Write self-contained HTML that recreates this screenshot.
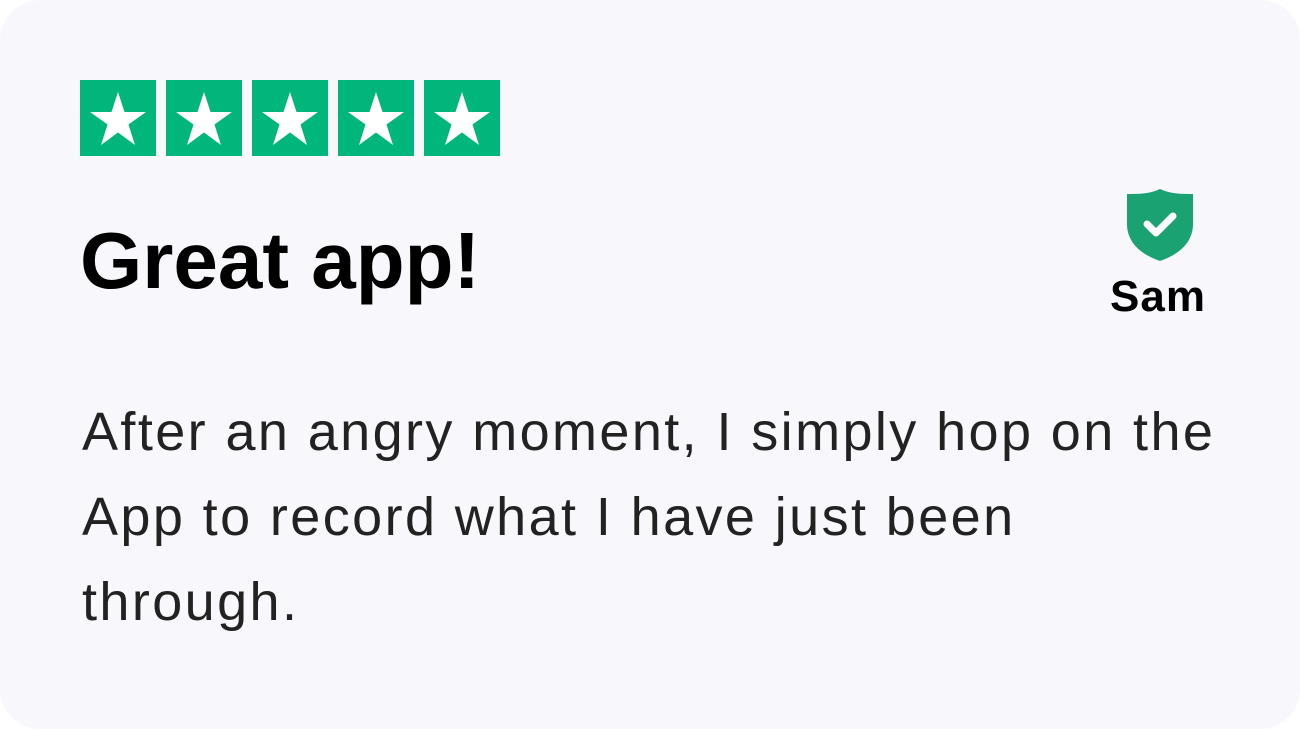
<!DOCTYPE html>
<html><head><meta charset="utf-8"><style>
html,body{margin:0;padding:0;background:#fff;}
.card{position:absolute;left:0;top:0;width:1300px;height:729px;background:#f8f7fc;border-radius:40px;font-family:"Liberation Sans",sans-serif;}
.stars{position:absolute;left:80px;top:80px;}
.star{position:absolute;top:0;width:76px;height:76px;background:#00b67a;}
h1{position:absolute;left:80px;top:216px;margin:0;font-size:80px;font-weight:bold;color:#000;letter-spacing:0px;line-height:90px;}
.body{position:absolute;left:82px;top:390px;width:1200px;font-size:54px;line-height:85px;color:#222;letter-spacing:2.4px;white-space:nowrap;}
.sam{position:absolute;left:1110px;top:272px;font-size:44px;font-weight:bold;color:#000;letter-spacing:1px;}
</style></head><body>
<div class="card">
<div class="stars">
<div class="star" style="left:0"></div><div class="star" style="left:86px"></div><div class="star" style="left:172px"></div><div class="star" style="left:258px"></div><div class="star" style="left:344px"></div>
<svg width="430" height="76" style="position:absolute;left:0;top:0">
<defs><g id="s"><polygon points="38,12 44.5,32 66,32 48.5,44.5 55,65 38,52.5 21,65 27.5,44.5 10,32 31.5,32" fill="#fff"/></g></defs>
<use href="#s" x="0"/><use href="#s" x="86"/><use href="#s" x="172"/><use href="#s" x="258"/><use href="#s" x="344"/>
</svg>
</div>
<h1>Great app!</h1>
<svg style="position:absolute;left:1126px;top:188px" width="68" height="74" viewBox="0 0 68 74">
<path d="M34 1 C24 6 12 6 1 6 L1 36 C1 55 16 67 34 73 C52 67 67 55 67 36 L67 6 C56 6 44 6 34 1Z" fill="#1ba272"/>
<path d="M21 36 L30 45 L47 28" stroke="#fff" stroke-width="7" fill="none" stroke-linecap="round" stroke-linejoin="round"/>
</svg>
<div class="sam">Sam</div>
<div class="body">After an angry moment, I simply hop on the<br>App to record what I have just been<br>through.</div>
</div>
</body></html>
